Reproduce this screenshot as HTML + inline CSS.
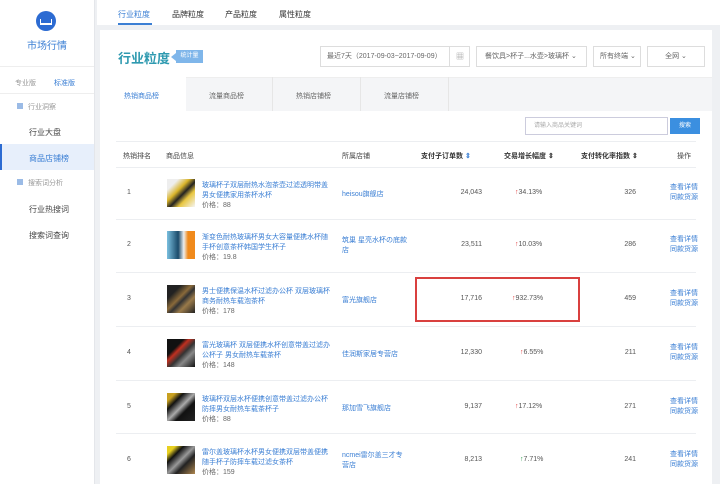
<!DOCTYPE html>
<html><head><meta charset="utf-8"><style>
*{margin:0;padding:0;box-sizing:border-box}
body{width:720px;height:484px;overflow:hidden;background:#eef0f3;font-family:"Liberation Sans","Noto Sans CJK SC",sans-serif;position:relative;color:#555}
.a{position:absolute;white-space:nowrap}
.side{position:absolute;left:0;top:0;width:95px;height:484px;background:#fff;border-right:1px solid #e4e6ea}
.bl{color:#3b7fd4}
.s7{font-size:7px}.s8{font-size:8px}
.row{position:absolute;left:116px;width:580px;height:1px;background:#eceef1}
.img{position:absolute;width:28px;height:28px;left:167px}
.t{font-size:7px;line-height:10px;color:#3b7fd4;white-space:normal;width:132px}
</style></head><body>
<div class="side">
 <div class="a" style="left:36px;top:11px;width:20px;height:20px;border-radius:50%;background:#2c6bd2"></div>
 <div class="a" style="left:40px;top:19px;width:12px;height:6px;border-bottom:2px solid #fff;border-left:1px solid #fff;border-right:1px solid #fff"></div>
 <div class="a bl" style="left:27px;top:37px;font-size:10px">市场行情</div>
 <div class="a" style="left:0;top:66px;width:94px;height:1px;background:#eee"></div>
 <div class="a s7" style="left:15px;top:78px;color:#999">专业版</div>
 <div class="a s7 bl" style="left:54px;top:78px">标准版</div>
 <div class="a" style="left:0;top:93px;width:94px;height:1px;background:#eee"></div>
 <div class="a" style="left:17px;top:103px;width:6px;height:6px;background:#9bbbe6"></div>
 <div class="a s7" style="left:28px;top:102px;color:#999">行业洞察</div>
 <div class="a s8" style="left:29px;top:127px;color:#444">行业大盘</div>
 <div class="a" style="left:0;top:144px;width:94px;height:26px;background:#e7effb;border-left:2px solid #2c6bd2"></div>
 <div class="a s8 bl" style="left:29px;top:153px">商品店铺榜</div>
 <div class="a" style="left:17px;top:179px;width:6px;height:6px;background:#9bbbe6"></div>
 <div class="a s7" style="left:28px;top:178px;color:#999">搜索词分析</div>
 <div class="a s8" style="left:29px;top:204px;color:#444">行业热搜词</div>
 <div class="a s8" style="left:29px;top:230px;color:#444">搜索词查询</div>
</div>
<div class="a" style="left:97px;top:0;width:623px;height:25px;background:#fff"></div>
<div class="a s8 bl" style="left:118px;top:9px">行业粒度</div>
<div class="a" style="left:118px;top:23px;width:34px;height:2px;background:#3b7fd4"></div>
<div class="a s8" style="left:172px;top:9px;color:#333">品牌粒度</div>
<div class="a s8" style="left:225px;top:9px;color:#333">产品粒度</div>
<div class="a s8" style="left:279px;top:9px;color:#333">属性粒度</div>
<div class="a" style="left:100px;top:30px;width:612px;height:454px;background:#fff"></div>
<div class="a" style="left:118px;top:48px;font-size:13px;color:#2f9ab0;font-weight:bold">行业粒度</div>
<div class="a" style="left:176px;top:50px;width:27px;height:13px;background:#7fb6ea;color:#fff;font-size:6px;line-height:13px;text-align:center">统计量</div>
<div class="a" style="left:171px;top:53px;border:4px solid transparent;border-right:5px solid #7fb6ea;border-left:0"></div>
<div class="a s7" style="left:320px;top:46px;width:150px;height:21px;border:1px solid #ddd;line-height:19px;padding-left:6px;color:#666">最近7天（2017-09-03~2017-09-09）</div>
<div class="a" style="left:449px;top:46px;width:21px;height:21px;border-left:1px solid #ddd;font-size:8px;line-height:21px;text-align:center;color:#999">▦</div>
<div class="a s7" style="left:476px;top:46px;width:111px;height:21px;border:1px solid #ddd;line-height:19px;padding-left:8px;color:#666">餐饮具&gt;杯子...水壶&gt;玻璃杯 ⌄</div>
<div class="a s7" style="left:593px;top:46px;width:48px;height:21px;border:1px solid #ddd;line-height:19px;padding-left:6px;color:#666">所有终端 ⌄</div>
<div class="a s7" style="left:647px;top:46px;width:58px;height:21px;border:1px solid #ddd;line-height:19px;text-align:center;color:#666">全网 ⌄</div>
<div class="a" style="left:100px;top:77px;width:612px;height:34px;background:#f4f5f7;border-top:1px solid #eee"></div>
<div class="a" style="left:100px;top:77px;width:86px;height:35px;background:#fff"></div>
<div class="a" style="left:272px;top:77px;width:1px;height:34px;background:#e6e6e6"></div>
<div class="a" style="left:360px;top:77px;width:1px;height:34px;background:#e6e6e6"></div>
<div class="a" style="left:448px;top:77px;width:1px;height:34px;background:#e6e6e6"></div>
<div class="a s7 bl" style="left:124px;top:91px">热销商品榜</div>
<div class="a s7" style="left:209px;top:91px;color:#666">流量商品榜</div>
<div class="a s7" style="left:296px;top:91px;color:#666">热销店铺榜</div>
<div class="a s7" style="left:384px;top:91px;color:#666">流量店铺榜</div>
<div class="a" style="left:525px;top:117px;width:143px;height:18px;border:1px solid #ccd;font-size:6px;line-height:16px;padding-left:8px;color:#aaa">请输入商品关键词</div>
<div class="a" style="left:670px;top:118px;width:30px;height:16px;background:#3b8fe0;color:#fff;font-size:6px;line-height:16px;text-align:center">搜索</div>
<div class="row" style="top:141px"></div>
<div class="a s7" style="left:123px;top:151px;color:#444">热销排名</div>
<div class="a s7" style="left:166px;top:151px;color:#444">商品信息</div>
<div class="a s7" style="left:342px;top:151px;color:#444">所属店铺</div>
<div class="a s7" style="left:421px;top:151px;color:#333;font-weight:bold">支付子订单数 <span class="bl">⇕</span></div>
<div class="a s7" style="left:504px;top:151px;color:#333;font-weight:bold">交易增长幅度 ⇕</div>
<div class="a s7" style="left:581px;top:151px;color:#333;font-weight:bold">支付转化率指数 ⇕</div>
<div class="a s7" style="left:677px;top:151px;color:#444">操作</div>
<div class="row" style="top:167px"></div>

<div class="a s7" style="left:127px;top:189px">1</div>
<div class="img" style="top:179px;background:linear-gradient(135deg,#eee 20%,#d9b42a 40%,#222 55%,#e8c640 70%,#f5f5f5)"></div>
<div class="a t" style="left:202px;top:181px">玻璃杯子双层耐热水泡茶壶过滤透明带盖男女便携家用茶杯水杯<br><span style="color:#666">价格：88</span></div>
<div class="a s7 bl" style="left:342px;top:189px">heisou旗舰店</div>
<div class="a s7" style="left:420px;top:189px;width:62px;text-align:right">24,043</div>
<div class="a s7" style="left:515px;top:189px"><span style="color:#e04040">↑</span>34.13%</div>
<div class="a s7" style="left:600px;top:189px;width:36px;text-align:right">326</div>
<div class="a t" style="left:670px;top:183px;width:30px">查看详情<br>同款货源</div>
<div class="row" style="top:219px"></div>

<div class="a s7" style="left:127px;top:241px">2</div>
<div class="img" style="top:231px;background:linear-gradient(90deg,#7ac0e0 0,#1a4a6a 40%,#eee 60%,#f08a1c 75%,#f08a1c)"></div>
<div class="a t" style="left:202px;top:233px">渐变色耐热玻璃杯男女大容量便携水杯随手杯创意茶杯韩国学生杯子<br><span style="color:#666">价格：19.8</span></div>
<div class="a t" style="left:342px;top:236px;width:70px">筑巢 星亮水杯の底款店</div>
<div class="a s7" style="left:420px;top:241px;width:62px;text-align:right">23,511</div>
<div class="a s7" style="left:515px;top:241px"><span style="color:#e04040">↑</span>10.03%</div>
<div class="a s7" style="left:600px;top:241px;width:36px;text-align:right">286</div>
<div class="a t" style="left:670px;top:235px;width:30px">查看详情<br>同款货源</div>
<div class="row" style="top:272px"></div>

<div class="a s7" style="left:127px;top:295px">3</div>
<div class="img" style="top:285px;background:linear-gradient(135deg,#222 25%,#8a6a3a 45%,#333 55%,#9a7a4a 70%,#222)"></div>
<div class="a t" style="left:202px;top:287px">男士便携保温水杯过滤办公杯 双层玻璃杯商务耐热车载泡茶杯<br><span style="color:#666">价格：178</span></div>
<div class="a s7 bl" style="left:342px;top:295px">富光旗舰店</div>
<div class="a s7" style="left:420px;top:295px;width:62px;text-align:right">17,716</div>
<div class="a s7" style="left:512px;top:295px"><span style="color:#e04040">↑</span>932.73%</div>
<div class="a s7" style="left:600px;top:295px;width:36px;text-align:right">459</div>
<div class="a t" style="left:670px;top:289px;width:30px">查看详情<br>同款货源</div>
<div class="a" style="left:415px;top:277px;width:165px;height:45px;border:2px solid #d9403f"></div>
<div class="row" style="top:326px"></div>

<div class="a s7" style="left:127px;top:349px">4</div>
<div class="img" style="top:339px;background:linear-gradient(135deg,#111 30%,#c03020 40%,#333 55%,#888 70%,#111)"></div>
<div class="a t" style="left:202px;top:341px">富光玻璃杯 双层便携水杯创意带盖过滤办公杯子 男女耐热车载茶杯<br><span style="color:#666">价格：148</span></div>
<div class="a s7 bl" style="left:342px;top:349px">佳润斯家居专营店</div>
<div class="a s7" style="left:420px;top:349px;width:62px;text-align:right">12,330</div>
<div class="a s7" style="left:520px;top:349px"><span style="color:#e04040">↑</span>6.55%</div>
<div class="a s7" style="left:600px;top:349px;width:36px;text-align:right">211</div>
<div class="a t" style="left:670px;top:343px;width:30px">查看详情<br>同款货源</div>
<div class="row" style="top:380px"></div>

<div class="a s7" style="left:127px;top:403px">5</div>
<div class="img" style="top:393px;background:linear-gradient(135deg,#c8a020 15%,#111 30%,#aaa 50%,#111 65%,#222)"></div>
<div class="a t" style="left:202px;top:395px">玻璃杯双层水杯便携创意带盖过滤办公杯防摔男女耐热车载茶杯子<br><span style="color:#666">价格：88</span></div>
<div class="a s7 bl" style="left:342px;top:403px">那加雪飞旗舰店</div>
<div class="a s7" style="left:420px;top:403px;width:62px;text-align:right">9,137</div>
<div class="a s7" style="left:515px;top:403px"><span style="color:#e04040">↑</span>17.12%</div>
<div class="a s7" style="left:600px;top:403px;width:36px;text-align:right">271</div>
<div class="a t" style="left:670px;top:397px;width:30px">查看详情<br>同款货源</div>
<div class="row" style="top:433px"></div>

<div class="a s7" style="left:127px;top:456px">6</div>
<div class="img" style="top:446px;background:linear-gradient(135deg,#e8d020 15%,#111 30%,#999 50%,#222 65%,#b08850)"></div>
<div class="a t" style="left:202px;top:448px">雷尔盖玻璃杯水杯男女便携双层带盖便携随手杯子防摔车载过滤女茶杯<br><span style="color:#666">价格：159</span></div>
<div class="a t" style="left:342px;top:451px;width:65px">ncmei雷尔盖三才专营店</div>
<div class="a s7" style="left:420px;top:456px;width:62px;text-align:right">8,213</div>
<div class="a s7" style="left:520px;top:456px"><span style="color:#2a9a4a">↑</span>7.71%</div>
<div class="a s7" style="left:600px;top:456px;width:36px;text-align:right">241</div>
<div class="a t" style="left:670px;top:450px;width:30px">查看详情<br>同款货源</div>
</body></html>
